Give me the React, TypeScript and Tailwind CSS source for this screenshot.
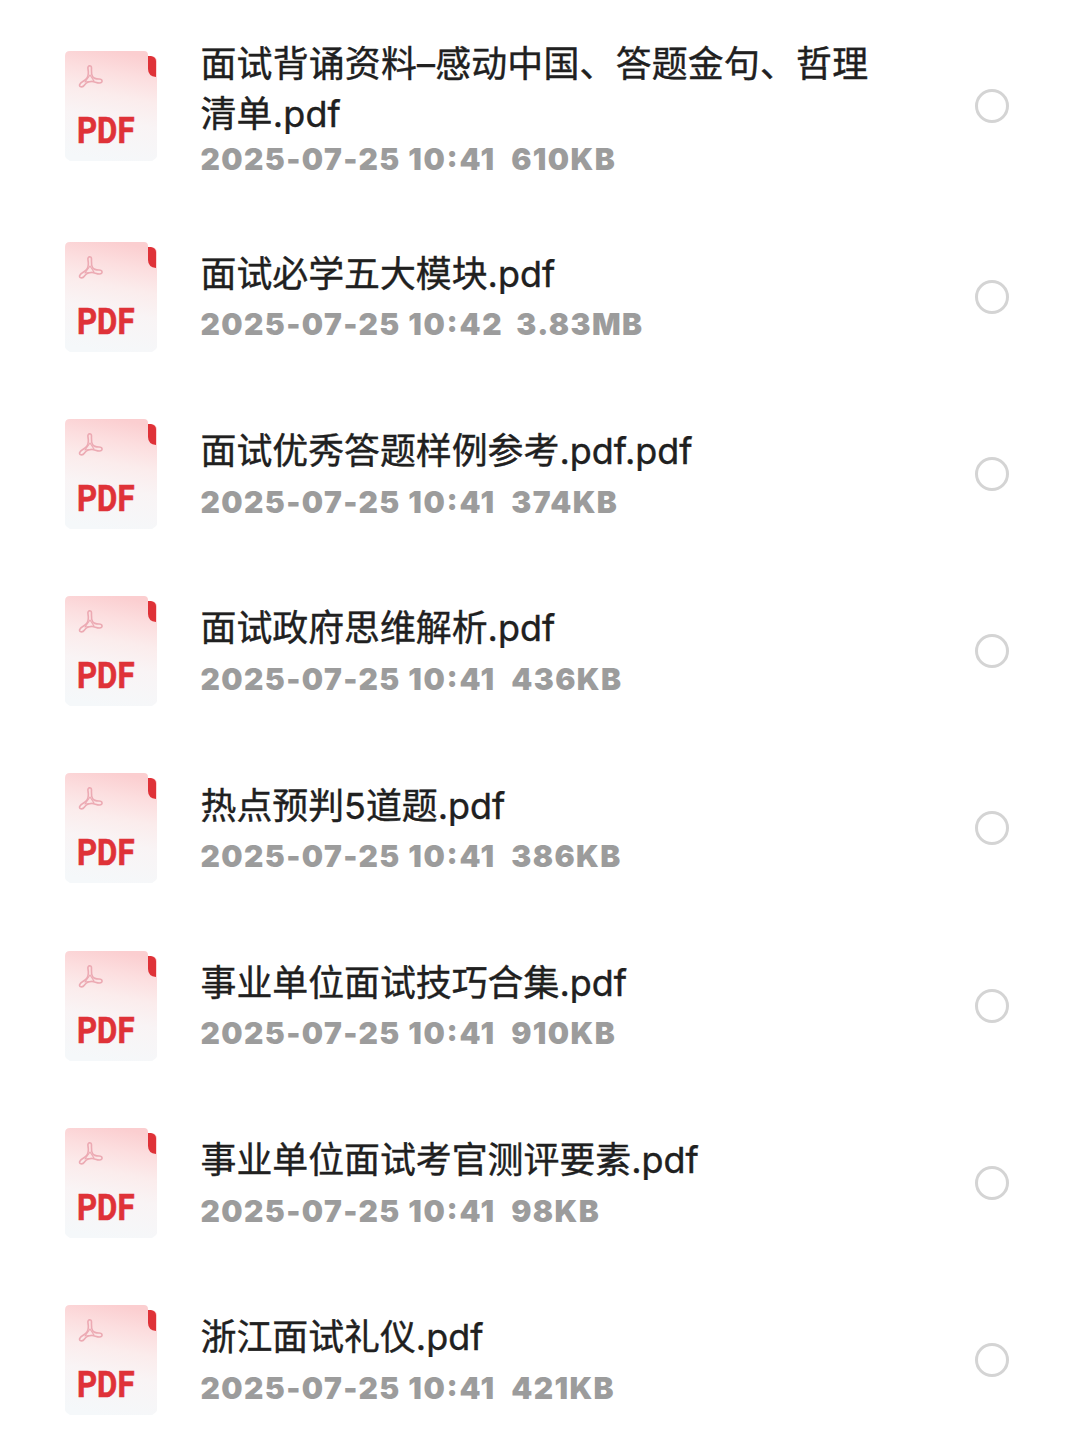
interface FileItem {
  name: string;
  date: string;
  time: string;
  size: string;
}

const FILES: FileItem[] = [
  { name: '面试背诵资料–感动中国、答题金句、哲理清单.pdf', date: '2025-07-25', time: '10:41', size: '610KB' },
  { name: '面试必学五大模块.pdf', date: '2025-07-25', time: '10:42', size: '3.83MB' },
  { name: '面试优秀答题样例参考.pdf.pdf', date: '2025-07-25', time: '10:41', size: '374KB' },
  { name: '面试政府思维解析.pdf', date: '2025-07-25', time: '10:41', size: '436KB' },
  { name: '热点预判5道题.pdf', date: '2025-07-25', time: '10:41', size: '386KB' },
  { name: '事业单位面试技巧合集.pdf', date: '2025-07-25', time: '10:41', size: '910KB' },
  { name: '事业单位面试考官测评要素.pdf', date: '2025-07-25', time: '10:41', size: '98KB' },
  { name: '浙江面试礼仪.pdf', date: '2025-07-25', time: '10:41', size: '421KB' },
];

function PdfIcon() {
  return (
    <svg viewBox="0 0 94 112" className="h-[112px] w-[94px] flex-none">
      <defs>
        <linearGradient id="page" x1="0.58" y1="0" x2="0.42" y2="1">
          <stop offset="0" stopColor="#fbced0" />
          <stop offset="0.2" stopColor="#fcdedf" />
          <stop offset="0.4" stopColor="#fbecec" />
          <stop offset="0.62" stopColor="#f9f4f5" />
          <stop offset="1" stopColor="#f5f8fa" />
        </linearGradient>
      </defs>
      <path
        d="M6 1H80Q84 1 84 5V6H88Q93 7 93 12V106Q93 108 88 111H6Q1 108 1 106V6Q1 1 6 1Z"
        fill="url(#page)"
      />
      <path d="M84 6H87Q92 7 92 11V27Q84 26 84 19Z" fill="#df3238" />
      <g fill="none" stroke="#ecaab3" strokeWidth="1.6" strokeLinecap="round" strokeLinejoin="round">
        <path d="M24 19C23 15.500 27.500 14.500 27.500 18C27.500 21 27 24 28.500 26.500C30 29 32.500 29 35 29C39 29 39 33 35.500 33C32.500 33 30.500 31.500 28 31.500C24.500 31.500 22.500 32 20.500 35C18.500 38 14 37 16 34C17.500 31.500 21 31 23 28C25 25 24.500 22 24 19Z" />
        <path d="M26 25L30 31L21 32Z" strokeWidth="1.2" />
      </g>
      <text
        x="13"
        y="92.500"
        fontFamily="Roboto, sans-serif"
        fontWeight="700"
        fontSize="36.5"
        textLength="57.5"
        lengthAdjust="spacingAndGlyphs"
        fill="#df3238"
        stroke="#df3238"
        strokeWidth="0.6"
      >
        PDF
      </text>
    </svg>
  );
}

function FileRow({ file }: { file: FileItem }) {
  return (
    <li className="group flex h-[177.25px] items-center pr-[71px] pl-16 first:h-[205px]">
      <PdfIcon />
      <div className="ml-[42.5px] w-[690px] pt-[3px] group-first:pt-[10px]">
        <h3 className="text-[35.9px] leading-[49.5px] font-normal text-[#202020] [-webkit-text-stroke:0.4px_#202020] group-first:tracking-[0.2px] font-['Inter','Noto_Sans_CJK_SC',sans-serif]">
          {file.name}
        </h3>
        <p className="mt-[3px] flex text-[30px] leading-[44px] font-black tracking-[1.4px] text-[#9c9c9c] group-first:-mt-[2px] font-['Inter',sans-serif]">
          <span className="mr-[7.5px]">{file.date}</span>
          <span className="mr-[13px] min-w-[90px] tracking-[1.7px] [font-feature-settings:'case']">{file.time}</span>
          <span>{file.size}</span>
        </p>
      </div>
      <span className="ml-auto size-[34px] rounded-full border-[3px] border-[#d4d4d4]" />
    </li>
  );
}

export default function App() {
  return (
    <main className="h-[1440px] w-[1080px] overflow-hidden bg-white pt-[3px]">
      <ul>
        {FILES.map((file) => (
          <FileRow key={file.name} file={file} />
        ))}
      </ul>
    </main>
  );
}
